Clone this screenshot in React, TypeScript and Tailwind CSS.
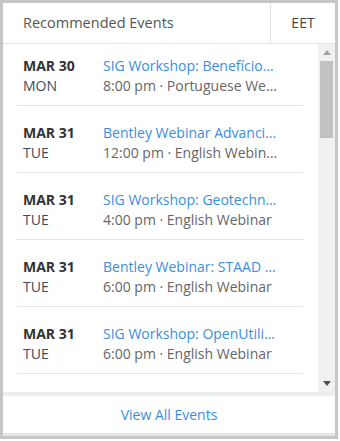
import React from 'react';

const events = [
    { month: 'MAR 30', day: 'MON', title: 'SIG Workshop: Benefícios do OpenRoads Designer', time: '8:00 pm', kind: 'Portuguese Webinar' },
    { month: 'MAR 31', day: 'TUE', title: 'Bentley Webinar Advancing BIM Workflows', time: '12:00 pm', kind: 'English Webinar' },
    { month: 'MAR 31', day: 'TUE', title: 'SIG Workshop: Geotechnical Analysis', time: '4:00 pm', kind: 'English Webinar' },
    { month: 'MAR 31', day: 'TUE', title: 'Bentley Webinar: STAAD Advanced Concrete', time: '6:00 pm', kind: 'English Webinar' },
    { month: 'MAR 31', day: 'TUE', title: 'SIG Workshop: OpenUtilities Substation', time: '6:00 pm', kind: 'English Webinar' },
];

export default function App() {
    return (
        <div className="w-[338px] h-[439px] border-[3px] border-[#c6c6c6] bg-white flex flex-col font-['Open_Sans',sans-serif] text-[14px] leading-[20px]">
            {/* Header */}
            <div className="h-[41px] flex border-b border-[#e4e4e4]">
                <div className="flex-1 flex items-center pl-[20px] text-[14.5px] text-[#555]">Recommended Events</div>
                <div className="w-[65px] flex items-center justify-center border-l border-[#e4e4e4] text-[#444]">EET</div>
            </div>

            {/* List + scrollbar */}
            <div className="h-[348px] flex">
                <div className="flex-1 overflow-hidden">
                    {events.map((ev, i) => (
                        <div
                            key={i}
                            className={`ml-[14px] mr-[15px] pl-[6px] pb-[9px] border-b border-[#e4e4e4] flex ${i === 0 ? 'pt-[12px]' : 'pt-[17px]'}`}
                        >
                            <div className="w-[80px] shrink-0">
                                <div className="font-bold text-[#333]">{ev.month}</div>
                                <div className="text-[#3f4a57]">{ev.day}</div>
                            </div>
                            <div className="w-[176px] min-w-0">
                                <div className="truncate text-[#3a8ee0]">{ev.title}</div>
                                <div className="truncate text-[#666]">{ev.time} · {ev.kind}</div>
                            </div>
                        </div>
                    ))}
                </div>
                <div className="w-[17px] bg-[#f1f1f1] flex flex-col items-center">
                    <div className="h-[17px] flex items-center justify-center">
                        <svg width="8" height="5" viewBox="0 0 8 5"><path d="M0 5 L4 0 L8 5 Z" fill="#a3a3a3" /></svg>
                    </div>
                    <div className="w-[13px] h-[77px] bg-[#c1c1c1]" />
                    <div className="flex-1" />
                    <div className="h-[17px] flex items-center justify-center">
                        <svg width="8" height="5" viewBox="0 0 8 5"><path d="M0 0 L8 0 L4 5 Z" fill="#505050" /></svg>
                    </div>
                </div>
            </div>

            <div className="h-[4px] bg-[#eceff1]" />

            {/* Footer */}
            <div className="h-[37px] flex items-center justify-center text-[#3a8ee0]">View All Events</div>
            <div className="h-[3px] bg-[#e6e6e6]" />
        </div>
    );
}
